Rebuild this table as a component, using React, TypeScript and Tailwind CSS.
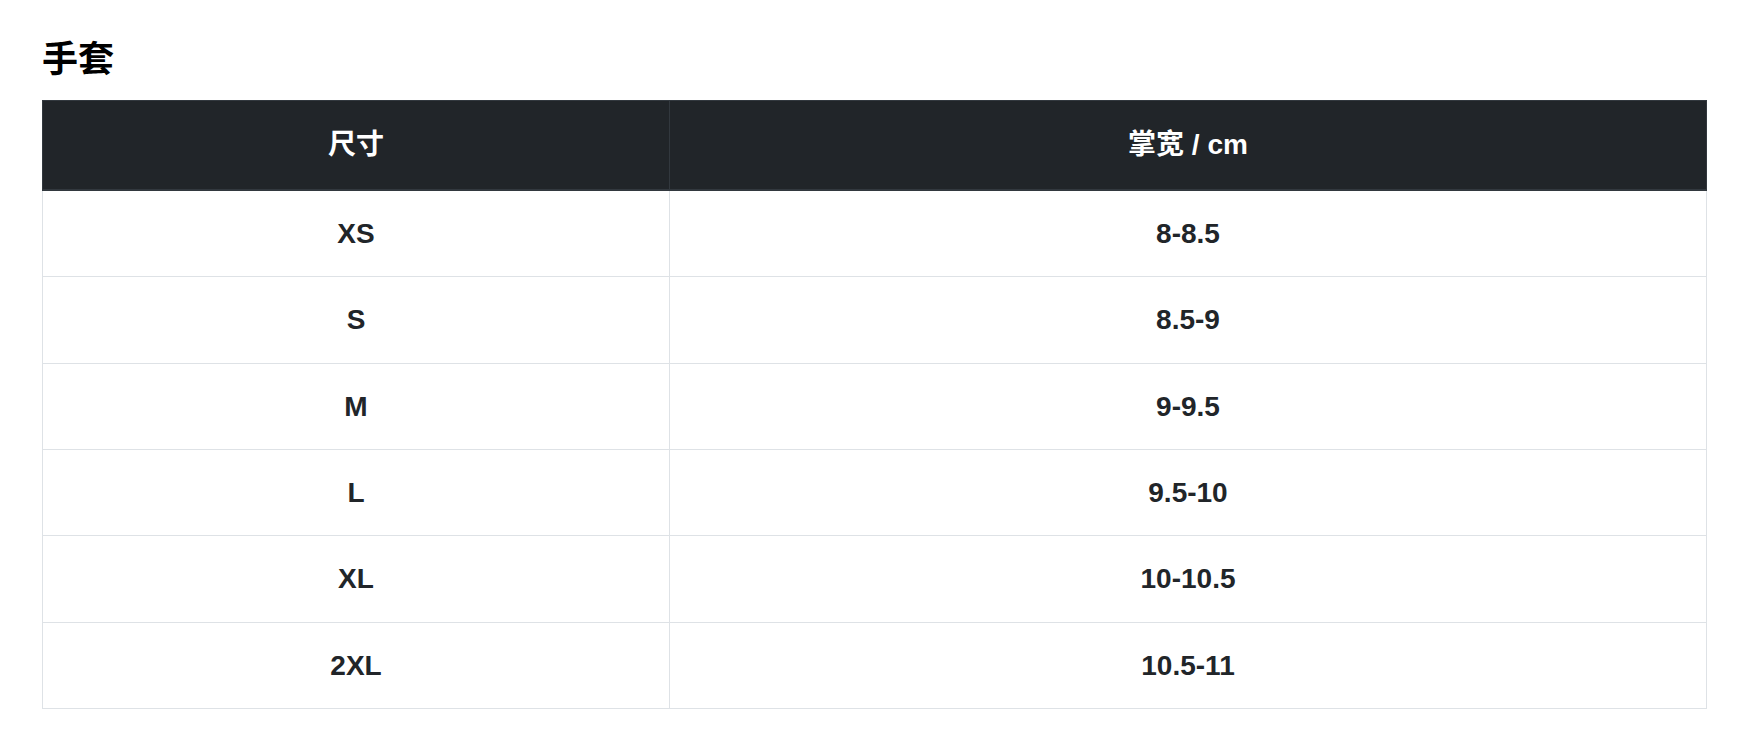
const rows = [
  ["XS", "8-8.5"],
  ["S", "8.5-9"],
  ["M", "9-9.5"],
  ["L", "9.5-10"],
  ["XL", "10-10.5"],
  ["2XL", "10.5-11"],
];

export default function App() {
  return (
    <div className="min-h-screen bg-white pl-[42px] pt-[38px] font-['Liberation_Sans','Noto_Sans_CJK_SC',sans-serif] text-[#212529]">
      {/* Title */}
      <h4 className="text-[36px] font-bold leading-[43px] text-black mb-[19px]">手套</h4>

      {/* Size table */}
      <table className="w-[1665px] border-collapse text-center text-[28px] font-bold">
        <thead>
          <tr className="bg-[#212529] text-white">
            <th className="w-[627px] border border-[#32383e] border-b-2 py-[22px] leading-[44px]">尺寸</th>
            <th className="border border-[#32383e] border-b-2 py-[22px] leading-[44px]">掌宽 / cm</th>
          </tr>
        </thead>
        <tbody>
          {rows.map(([size, width]) => (
            <tr key={size}>
              <td className="border border-[#dee2e6] py-[21px] leading-[43.33px]">{size}</td>
              <td className="border border-[#dee2e6] py-[21px] leading-[43.33px]">{width}</td>
            </tr>
          ))}
        </tbody>
      </table>
    </div>
  );
}
